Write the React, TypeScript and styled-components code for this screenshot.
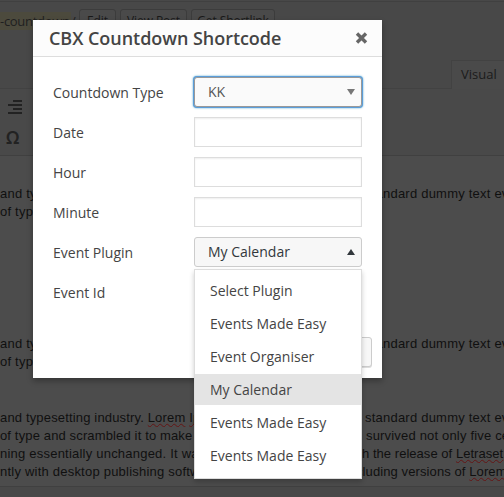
import React from 'react';
import styled, { createGlobalStyle, css } from 'styled-components';

const GlobalStyle = createGlobalStyle`
  * { box-sizing: border-box; }
  html, body { margin: 0; padding: 0; overflow: hidden; }
  body { background: #484848; font-family: "Open Sans", sans-serif; }
`;

const Page = styled.div`
  position: relative;
  width: 504px;
  height: 497px;
  overflow: hidden;
  display: flex;
  flex-direction: column;
  background: #484848;
`;

const PermalinkBar = styled.div`
  height: 59px;
  margin-top: 1px;
  border-top: 1px solid #404040;
  padding-top: 7px;
  display: flex;
  align-items: flex-start;
  font-size: 13px;
  color: #202020;
  white-space: nowrap;
`;

const Slug = styled.span`
  height: 18px;
  width: 71px;
  flex: none;
  margin-top: 3px;
  line-height: 18px;
  letter-spacing: -0.3px;
  background: #4c4a3d;
`;

const Slash = styled.span`
  margin-top: 3px;
  width: 8px;
  flex: none;
  line-height: 18px;
`;

const SmallButton = styled.button<{ $width: number }>`
  width: ${(p) => p.$width}px;
  height: 24px;
  margin-right: 4px;
  padding: 0;
  flex: none;
  border: 1px solid #3c3c3c;
  border-radius: 3px;
  background: #4a4a4a;
  color: #191919;
  font: 12px/22px "Open Sans", sans-serif;
  letter-spacing: -0.1px;
`;

const TabRow = styled.div`
  height: 29px;
  display: flex;
  justify-content: flex-end;
  border-bottom: 1px solid #424242;
`;

const Tab = styled.div`
  width: 53px;
  height: 29px;
  padding-left: 9px;
  border: 1px solid #424242;
  border-width: 1px 0 0 1px;
  background: #4a4a4a;
  color: #1b1b1b;
  font-size: 13px;
  line-height: 27px;
`;

const Toolbar = styled.div`
  height: 67px;
  padding: 10px 0 0 6px;
  border-bottom: 1px solid #404040;
  display: flex;
  flex-direction: column;
  gap: 11px;
  background: #494949;
`;

const Omega = styled.span`
  height: 22px;
  font: 600 18px/22px "Noto Sans", sans-serif;
  color: #222;
`;

const Editor = styled.div`
  height: 331px;
  padding-top: 29px;
  border-bottom: 1px solid #404040;
  background: #4c4c4c;
  color: #101010;
  font: 13px/18px "Liberation Sans", Arial, sans-serif;
`;

const Paragraph = styled.div<{ $gap: number }>`
  margin-bottom: ${(p) => p.$gap}px;
`;

const Line = styled.div`
  display: grid;
  grid-template-columns: 194px 310px;
  height: 18px;
  white-space: pre;
  overflow: hidden;
`;

const Segment = styled.span<{ $shift?: number; $tracking?: number }>`
  overflow: hidden;
  display: block;
  text-indent: ${(p) => p.$shift ?? 0}px;
  letter-spacing: ${(p) => p.$tracking ?? 0.22}px;
`;

const Misspelled = styled.span`
  text-decoration: underline wavy #641515 1px;
  text-decoration-skip-ink: none;
  text-underline-offset: 1px;
`;

const Modal = styled.section`
  position: absolute;
  left: 33px;
  top: 20px;
  width: 349px;
  height: 358px;
  background: #fff;
  box-shadow: 0 3px 6px rgba(0, 0, 0, 0.3);
`;

const ModalHeader = styled.header`
  height: 37px;
  padding: 0 14px 0 16px;
  display: flex;
  align-items: center;
  justify-content: space-between;
  border-bottom: 1px solid #ddd;
  background: #fcfcfc;
`;

const Title = styled.h1`
  margin: 0;
  color: #444;
  font-size: 18px;
  font-weight: 600;
  letter-spacing: -0.04px;
  line-height: 36px;
  white-space: nowrap;
`;

const Form = styled.div`
  padding: 20px 20px 0;
  display: flex;
  flex-direction: column;
  gap: 10px;
`;

const Field = styled.div`
  height: 30px;
  display: grid;
  grid-template-columns: 141px 168px;
  grid-template-rows: 30px;
`;

const Label = styled.label`
  color: #444;
  font-size: 14px;
  line-height: 31px;
`;

const TextInput = styled.input`
  display: block;
  width: 168px;
  height: 30px;
  border: 1px solid #ddd;
  background: #fff;
  box-shadow: inset 0 1px 2px rgba(0, 0, 0, 0.07);
`;

const SelectBox = styled.div<{ $focused?: boolean }>`
  width: 168px;
  height: 30px;
  padding: 0 6px 0 13px;
  display: flex;
  align-items: center;
  justify-content: space-between;
  border: 1px solid #ccc;
  border-radius: 3px;
  background: #f7f7f7;
  color: #32373c;
  font-size: 14px;
  line-height: 27px;
  ${(p) =>
    p.$focused &&
    css`
      border-color: #999;
      background: #fafafa;
      color: #555;
      box-shadow: 0 0 0 1px #5b9dd9, 0 0 2px 1px rgba(30, 140, 190, 0.8);
    `}
`;

const SelectValue = styled.span`
  padding-bottom: 1px;
`;

const FooterButton = styled.button`
  position: absolute;
  right: 10px;
  bottom: 11px;
  width: 70px;
  height: 30px;
  border: 1px solid #ccc;
  border-radius: 3px;
  background: #f7f7f7;
  box-shadow: 0 1px 0 #ddd;
`;

const Menu = styled.ul`
  position: absolute;
  left: 194px;
  top: 269px;
  width: 168px;
  height: 210px;
  margin: 0;
  padding: 5px 0 0;
  list-style: none;
  border: 1px solid #ddd;
  background: #fff;
  box-shadow: 0 3px 5px rgba(0, 0, 0, 0.2);
`;

const Option = styled.li<{ $selected?: boolean }>`
  height: 31px;
  margin-bottom: 2px;
  padding-left: 15px;
  color: #444;
  font-size: 14px;
  line-height: 31px;
  background: ${(p) => (p.$selected ? '#e4e4e4' : 'transparent')};
`;

const AlignRightIcon = () => (
  <svg width="18" height="16" viewBox="0 0 18 16" shapeRendering="crispEdges">
    <path d="M7 1h9v2H7zM2 5h14v2H2zM7 9h9v2H7zM2 13h14v2H2z" fill="#222" />
  </svg>
);

const CloseIcon = () => (
  <svg width="13" height="12" viewBox="0 0 13 12">
    <path d="M2 1.5L11 10.5M11 1.5L2 10.5" stroke="#666" strokeWidth="3.4" />
  </svg>
);

const Caret = ({ up }: { up?: boolean }) => (
  <svg width="8" height="6" viewBox="0 0 8 6">
    <path d={up ? 'M4 0L8 6H0z' : 'M0 0H8L4 6z'} fill={up ? '#32373c' : '#777'} />
  </svg>
);

const inputs = ['Date', 'Hour', 'Minute'];
const options = [
  'Select Plugin',
  'Events Made Easy',
  'Event Organiser',
  'My Calendar',
  'Events Made Easy',
  'Events Made Easy',
];

export default function App() {
  return (
    <>
      <GlobalStyle />
      <Page>
        <PermalinkBar>
          <Slug>-countdown</Slug>
          <Slash>/</Slash>
          <SmallButton $width={37}>Edit</SmallButton>
          <SmallButton $width={67}>View Post</SmallButton>
          <SmallButton $width={84}>Get Shortlink</SmallButton>
        </PermalinkBar>
        <TabRow>
          <Tab>Visual</Tab>
        </TabRow>
        <Toolbar>
          <AlignRightIcon />
          <Omega>Ω</Omega>
        </Toolbar>
        <Editor>
          {[0, 1].map((n) => (
            <Paragraph key={n} $gap={n === 0 ? 114 : 38}>
              <Line>
                <Segment>and type</Segment>
                <Segment $shift={171}>standard dummy text eve</Segment>
              </Line>
              <Line>
                <Segment>of type</Segment>
              </Line>
            </Paragraph>
          ))}
          <Line>
            <Segment $tracking={0.16}>
              and typesetting industry. <Misspelled>Lorem</Misspelled> <Misspelled>Ipsum</Misspelled>
            </Segment>
            <Segment $shift={171}>standard dummy text eve</Segment>
          </Line>
          <Line>
            <Segment $tracking={0.14}>of type and scrambled it to make</Segment>
            <Segment $shift={172} $tracking={0.18}>survived not only five ce</Segment>
          </Line>
          <Line>
            <Segment>ning essentially unchanged. It was</Segment>
            <Segment $shift={168} $tracking={0.04}>
              h the release of <Misspelled>Letraset</Misspelled>
            </Segment>
          </Line>
          <Line>
            <Segment>ntly with desktop publishing softw</Segment>
            <Segment $shift={162} $tracking={0.1}>
              cluding versions of <Misspelled>Lorem</Misspelled>
            </Segment>
          </Line>
        </Editor>

        <Modal>
          <ModalHeader>
            <Title>CBX Countdown Shortcode</Title>
            <CloseIcon />
          </ModalHeader>
          <Form>
            <Field>
              <Label>Countdown Type</Label>
              <SelectBox $focused>
                <SelectValue>KK</SelectValue>
                <Caret />
              </SelectBox>
            </Field>
            {inputs.map((name) => (
              <Field key={name}>
                <Label>{name}</Label>
                <TextInput />
              </Field>
            ))}
            <Field>
              <Label>Event Plugin</Label>
              <SelectBox>
                <SelectValue>My Calendar</SelectValue>
                <Caret up />
              </SelectBox>
            </Field>
            <Field>
              <Label>Event Id</Label>
            </Field>
          </Form>
          <FooterButton />
        </Modal>
        <Menu>
          {options.map((name, i) => (
            <Option key={i} $selected={i === 3}>
              {name}
            </Option>
          ))}
        </Menu>
      </Page>
    </>
  );
}
